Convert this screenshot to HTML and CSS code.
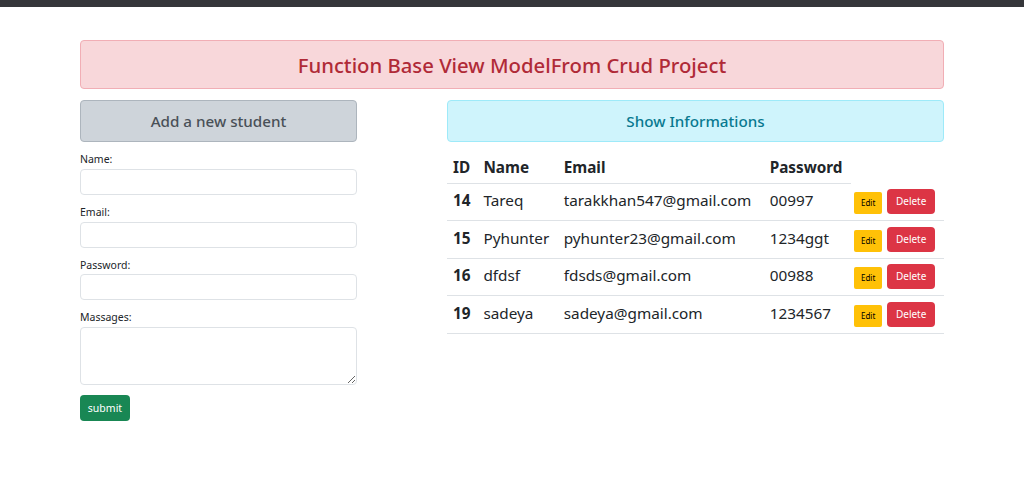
FILE: index.html
```html
<!DOCTYPE html>
<html>
<head>
<meta charset="utf-8">
<link rel="stylesheet" href="styles.css">
</head>
<body>
<div class="topbar"></div>
<div class="container">
  <div class="title-alert">Function Base View ModelFrom Crud Project</div>
  <div class="row">
    <div class="col-left">
      <div class="heading gray">Add a new student</div>
      <form class="form">
        <label class="lbl">Name:</label>
        <input class="field" type="text">
        <label class="lbl">Email:</label>
        <input class="field" type="text">
        <label class="lbl">Password:</label>
        <input class="field" type="text">
        <label class="lbl">Massages:</label>
        <textarea class="field area"></textarea>
        <button class="btn-submit" type="button">submit</button>
      </form>
    </div>
    <div class="col-right">
      <div class="heading info">Show Informations</div>
      <table class="tbl">
        <thead>
          <tr><th>ID</th><th>Name</th><th>Email</th><th>Password</th></tr>
        </thead>
        <tbody>
          <tr><th>14</th><td>Tareq</td><td>tarakkhan547@gmail.com</td><td>00997</td><td class="acts"><span class="b-edit">Edit</span><span class="b-del">Delete</span></td></tr>
          <tr><th>15</th><td>Pyhunter</td><td>pyhunter23@gmail.com</td><td>1234ggt</td><td class="acts"><span class="b-edit">Edit</span><span class="b-del">Delete</span></td></tr>
          <tr><th>16</th><td>dfdsf</td><td>fdsds@gmail.com</td><td>00988</td><td class="acts"><span class="b-edit">Edit</span><span class="b-del">Delete</span></td></tr>
          <tr><th>19</th><td>sadeya</td><td>sadeya@gmail.com</td><td>1234567</td><td class="acts"><span class="b-edit">Edit</span><span class="b-del">Delete</span></td></tr>
        </tbody>
      </table>
    </div>
  </div>
</div>
</body>
</html>
```
FILE: styles.css
```css
* { box-sizing: border-box; }
html, body { margin: 0; padding: 0; background: #fff; }
body { font-family: "Noto Sans", "Open Sans", sans-serif; color: #212529; }
.topbar { height: 7px; background: #35363a; }
.container { width: 864px; margin: 33px 0 0 80px; }
.title-alert {
  height: 49px;
  background: #f8d7da;
  border: 1px solid #f1aeb5;
  border-radius: 4px;
  color: #b02a37;
  font-size: 20.3px;
  font-weight: 500;
  display: flex; align-items: center; justify-content: center;
}
.row { display: flex; gap: 90px; margin-top: 11px; }
.col-left { width: 277px; }
.col-right { width: 497px; }
.heading {
  height: 42px;
  border-radius: 4px;
  display: flex; align-items: center; justify-content: center;
  font-size: 15.2px; font-weight: 500;
}
.gray { background: #ced4da; border: 1px solid #adb5bd; color: #495057; }
.info { background: #cff4fc; border: 1px solid #9eeaf9; color: #087990; }
.form { display: flex; flex-direction: column; align-items: flex-start; padding-top: 10.4px; }
.lbl { font-size: 10.5px; line-height: 14.67px; margin-bottom: 2px; color: #212529; }
.field {
  width: 277px; height: 26px;
  border: 1px solid #dee2e6; border-radius: 4px;
  margin: 0 0 10px 0; font-family: inherit;
}
.area { height: 58px; margin-bottom: 10px; resize: vertical; }
.btn-submit {
  background: #198754; color: #fff; border: none; border-radius: 4px;
  font-family: inherit; font-size: 10.5px; width: 50px; height: 26px; padding: 0;
}
.tbl { width: 100%; border-collapse: collapse; margin-top: 13px; font-size: 15.3px; }
.tbl th, .tbl td { text-align: left; padding: 0 6px 3px 6px; vertical-align: middle; }
.tbl thead th { height: 28px; font-weight: 700; border-bottom: 1px solid #dee2e6; }
.tbl tbody tr { height: 37.5px; border-bottom: 1px solid #dee2e6; }
.tbl tbody th { font-weight: 700; }
.tbl tbody td { font-weight: 400; }
.acts { white-space: nowrap; padding: 0 6px 0 3px !important; }
.b-edit {
  display: inline-block; vertical-align: bottom;
  background: #ffc107; color: #000; font-size: 8px;
  width: 28px; height: 22px; line-height: 22px; text-align: center;
  border-radius: 2px; margin-right: 5px;
}
.b-del {
  display: inline-block; vertical-align: bottom;
  background: #dc3545; color: #fff; font-size: 10px;
  width: 48px; height: 25px; line-height: 25px; text-align: center;
  border-radius: 4px;
}
```
